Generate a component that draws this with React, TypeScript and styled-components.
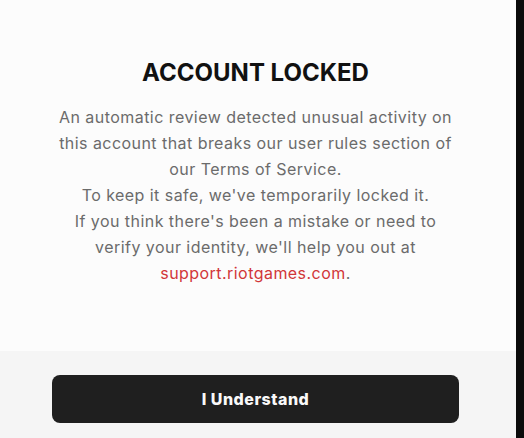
import React from "react";
import styled, { createGlobalStyle } from "styled-components";

const Global = createGlobalStyle`
  html, body { margin: 0; padding: 0; background: #0b0b0b; }
  body { font-family: Inter, "Noto Sans", sans-serif; }
  * { box-sizing: border-box; }
`;

const Shell = styled.div`
  display: flex;
  width: 524px;
  height: 438px;
  background: #0b0b0b;
`;

const Panel = styled.div`
  width: 516px;
  display: flex;
  flex-direction: column;
`;

const Content = styled.section`
  background: #fcfcfc;
  height: 351px;
  display: flex;
  flex-direction: column;
  align-items: center;
  padding: 58px 5px 0 0;
`;

const Title = styled.h1`
  margin: 0 0 17px;
  font-size: 24px;
  line-height: 29px;
  font-weight: 700;
  color: #111111;
  letter-spacing: 0;
`;

const Body = styled.p`
  margin: 0;
  width: 400px;
  text-align: center;
  font-size: 16px;
  line-height: 26px;
  letter-spacing: 0.45px;
  color: #6b6b6b;
`;

const Link = styled.a`
  color: #d13639;
  text-decoration: none;
`;

const Footer = styled.footer`
  flex: 1;
  background: #f5f5f5;
  padding: 24px 57px 0 52px;
`;

const Button = styled.button`
  width: 100%;
  height: 48px;
  border: none;
  border-radius: 8px;
  background: #1f1f1f;
  color: #f9f9f9;
  font-family: Inter, "Noto Sans", sans-serif;
  font-size: 16px;
  font-weight: 800;
  letter-spacing: 0.5px;
  cursor: pointer;
`;

export default function App() {
  return (
    <Shell>
      <Global />
      <Panel>
        <Content>
          <Title>ACCOUNT LOCKED</Title>
          <Body>
            An automatic review detected unusual activity on this account that breaks our user rules section of our Terms of Service.
            <br />
            To keep it safe, we've temporarily locked it.
            <br />
            If you think there's been a mistake or need to verify your identity, we'll help you out at{" "}
            <Link href="#">support.riotgames.com</Link>.
          </Body>
        </Content>
        <Footer>
          <Button>I Understand</Button>
        </Footer>
      </Panel>
    </Shell>
  );
}
